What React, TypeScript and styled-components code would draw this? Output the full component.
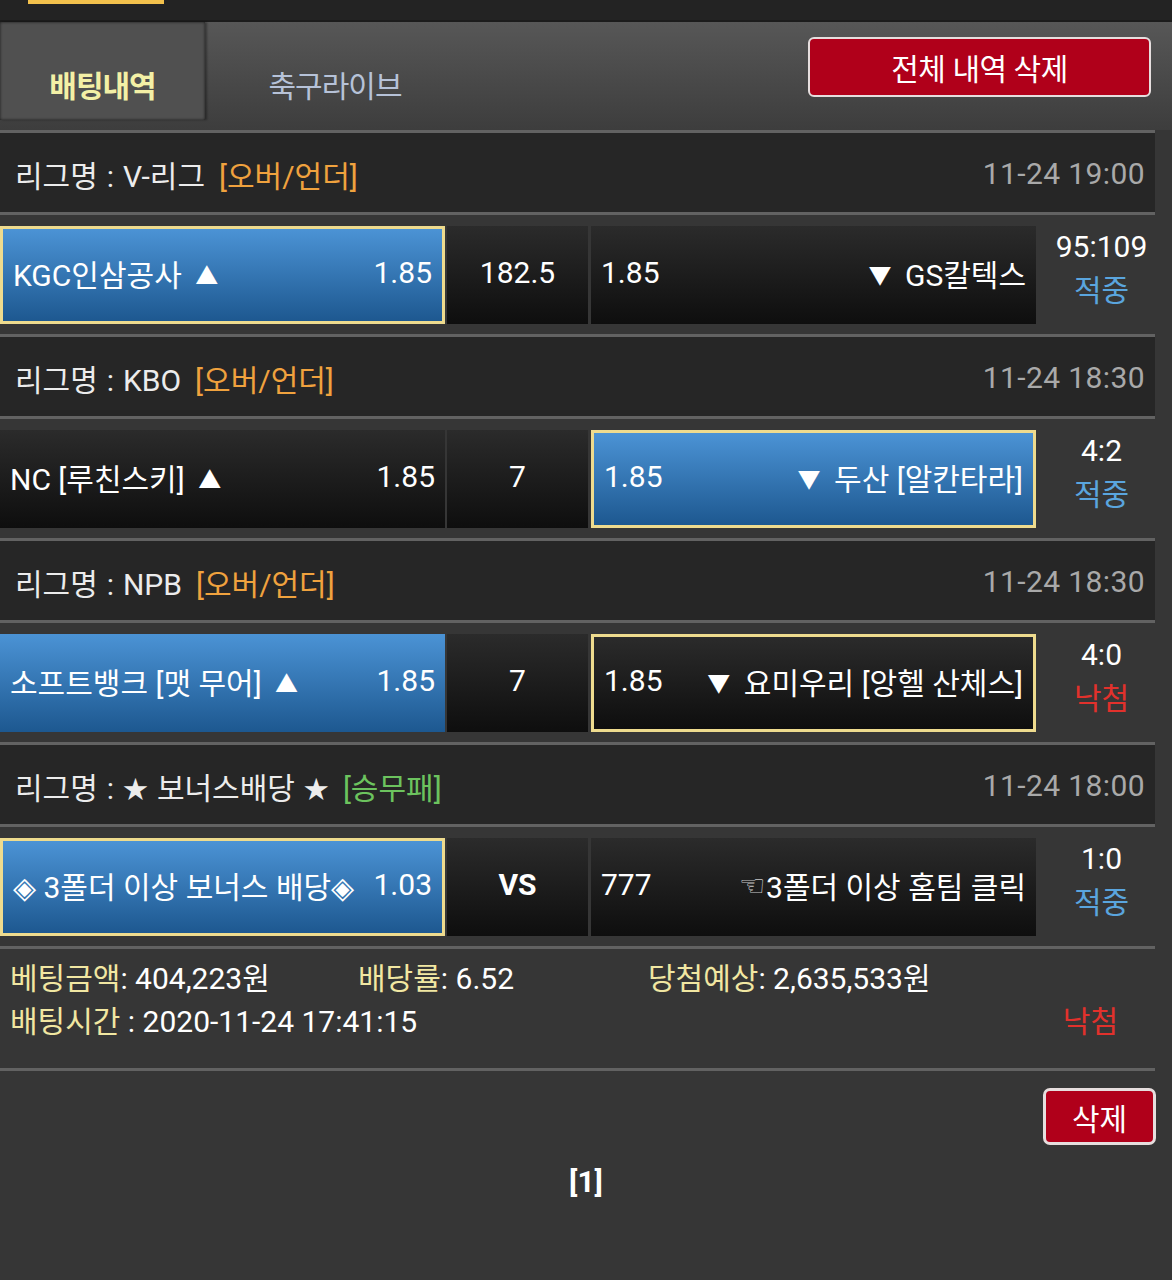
import React from "react";
import styled, { createGlobalStyle, css } from "styled-components";

const GlobalStyle = createGlobalStyle`
  html, body {
    margin: 0;
    padding: 0;
    background: #363636;
  }
  body {
    font-family: Roboto, "Noto Sans CJK KR", "DejaVu Sans", sans-serif;
    color: #fff;
    width: 1172px;
  }
  * { box-sizing: border-box; }
`;

const Page = styled.div`
  width: 1172px;
  min-height: 1280px;
  background: #363636;
`;

const TopStrip = styled.div`
  height: 22px;
  background: #232323;
  padding-left: 28px;
  border-bottom: 2px solid #1c1c1c;
`;

const YellowMark = styled.div`
  width: 136px;
  height: 4px;
  background: #f3c14c;
`;

const TabBar = styled.div`
  height: 108px;
  display: flex;
  align-items: flex-start;
  background: linear-gradient(#575757, #3d3d3d);
`;

const Tab = styled.div<{ $active?: boolean }>`
  height: 98px;
  display: flex;
  align-items: flex-end;
  justify-content: center;
  padding-bottom: 13px;
  font-size: 30px;
  line-height: 40px;
  letter-spacing: -1px;
  ${(p) =>
    p.$active
      ? css`
          width: 205px;
          background: #505050;
          color: #f3f0a6;
          font-weight: 700;
          box-shadow: inset 0 0 3px rgba(0, 0, 0, 0.7), 2px 0 2px rgba(0, 0, 0, 0.35);
        `
      : css`
          width: 260px;
          color: #b6c2d8;
          font-weight: 400;
        `}
`;

const DeleteAllButton = styled.button`
  margin: 15px 21px 0 auto;
  width: 343px;
  height: 60px;
  border-radius: 6px;
  border: 2px solid #e6dede;
  background: #b0001a;
  color: #fff;
  font-family: inherit;
  font-size: 30px;
  letter-spacing: -0.5px;
  padding: 0;
`;

const List = styled.div`
  width: 1155px;
`;

const Rule = styled.div`
  height: 3px;
  background: #626262;
`;

const LeagueHeader = styled.div`
  height: 79px;
  background: #262626;
  display: flex;
  align-items: center;
  padding: 2px 10px 0 15px;
  font-size: 30px;
`;

const LeagueName = styled.span`
  color: #ececec;
  word-spacing: 1.5px;
`;

const Star = styled.span`
  font-size: 25px;
  vertical-align: 1px;
`;

const Tag = styled.span<{ $color: string }>`
  color: ${(p) => p.$color};
  margin-left: 14px;
`;

const DateText = styled.span`
  margin-left: auto;
  color: #a9a9a9;
  letter-spacing: 0.4px;
`;

const MatchRow = styled.div`
  height: 119px;
  display: flex;
  align-items: flex-start;
  padding-top: 11px;
`;

const cellBase = css`
  height: 98px;
  display: flex;
  align-items: center;
  padding-bottom: 5px;
  font-size: 30px;
  color: #fff;
`;

const TeamCell = styled.div<{ $blue?: boolean; $outlined?: boolean; $side: "home" | "away" }>`
  ${cellBase};
  width: 445px;
  justify-content: space-between;
  padding-left: 10px;
  padding-right: 10px;
  margin-right: ${(p) => (p.$side === "home" ? "2px" : "0")};
  background: ${(p) =>
    p.$blue
      ? "linear-gradient(#4b93d5, #1d5890)"
      : "linear-gradient(#2b2b2b, #0e0e0e)"};
  border: ${(p) => (p.$outlined ? "3px solid #eedb8e" : "none")};
`;

const CenterCell = styled.div<{ $bold?: boolean }>`
  ${cellBase};
  width: 141px;
  margin-right: 3px;
  justify-content: center;
  background: linear-gradient(#2b2b2b, #0e0e0e);
  font-weight: ${(p) => (p.$bold ? 700 : 400)};
`;

const Tri = styled.span<{ $dir: "up" | "down" }>`
  font-family: "Noto Sans CJK KR", sans-serif;
  font-size: 23px;
  vertical-align: 2px;
  margin: ${(p) => (p.$dir === "up" ? "0 0 0 6px" : "0 6px 0 0")};
`;

const ResultCell = styled.div`
  width: 119px;
  height: 98px;
  padding-left: 12px;
  margin-top: -1px;
  display: flex;
  flex-direction: column;
  align-items: center;
  justify-content: flex-start;
  font-size: 30px;
  line-height: 44px;
`;

const Score = styled.span`
  color: #fff;
`;

const Status = styled.span<{ $win: boolean }>`
  color: ${(p) => (p.$win ? "#5aa5de" : "#e2312c")};
`;

const Pointer = styled.span`
  font-family: "DejaVu Sans", sans-serif;
  font-size: 30px;
  color: #c8c8c8;
  vertical-align: 2px;
`;

const FooterInfo = styled.div`
  padding: 8px 37px 25px 10px;
  font-size: 30px;
  line-height: 43px;
`;

const InfoLine = styled.div`
  display: flex;
  align-items: center;
`;

const InfoItem = styled.div<{ $width?: number }>`
  width: ${(p) => (p.$width ? `${p.$width}px` : "auto")};
  white-space: nowrap;
`;

const Label = styled.span`
  color: #f1e7a2;
`;

const Value = styled.span`
  color: #fff;
`;

const FooterStatus = styled.span`
  margin-left: auto;
  color: #e2312c;
`;

const ActionRow = styled.div`
  display: flex;
  justify-content: flex-end;
  padding: 17px 16px 0 0;
`;

const DeleteButton = styled.button`
  width: 113px;
  height: 57px;
  border-radius: 7px;
  border: 3px solid #e6dede;
  background: #b0001a;
  color: #fff;
  font-family: inherit;
  font-size: 30px;
  padding: 0;
`;

const Pagination = styled.div`
  margin-top: 17px;
  text-align: center;
  font-size: 30px;
  line-height: 40px;
  font-weight: 700;
  color: #fff;
`;

type Side = { text: React.ReactNode; odds: string; blue?: boolean; outlined?: boolean };
type Game = {
  league: React.ReactNode;
  tag: string;
  tagColor: string;
  date: string;
  home: Side;
  mid: string;
  midBold?: boolean;
  away: Side;
  score: string;
  win: boolean;
};

const ORANGE = "#f0a23e";
const GREEN = "#6cc35e";

const Up = () => <Tri $dir="up">▲</Tri>;
const Down = () => <Tri $dir="down">▼</Tri>;

const games: Game[] = [
  {
    league: "V-리그",
    tag: "[오버/언더]",
    tagColor: ORANGE,
    date: "11-24 19:00",
    home: { text: <>KGC인삼공사 <Up /></>, odds: "1.85", blue: true, outlined: true },
    mid: "182.5",
    away: { text: <><Down /> GS칼텍스</>, odds: "1.85" },
    score: "95:109",
    win: true,
  },
  {
    league: "KBO",
    tag: "[오버/언더]",
    tagColor: ORANGE,
    date: "11-24 18:30",
    home: { text: <>NC [루친스키] <Up /></>, odds: "1.85" },
    mid: "7",
    away: { text: <><Down /> 두산 [알칸타라]</>, odds: "1.85", blue: true, outlined: true },
    score: "4:2",
    win: true,
  },
  {
    league: "NPB",
    tag: "[오버/언더]",
    tagColor: ORANGE,
    date: "11-24 18:30",
    home: { text: <>소프트뱅크 [맷 무어] <Up /></>, odds: "1.85", blue: true },
    mid: "7",
    away: { text: <><Down /> 요미우리 [앙헬 산체스]</>, odds: "1.85", outlined: true },
    score: "4:0",
    win: false,
  },
  {
    league: (
      <>
        <Star>★</Star> 보너스배당 <Star>★</Star>
      </>
    ),
    tag: "[승무패]",
    tagColor: GREEN,
    date: "11-24 18:00",
    home: { text: "◈ 3폴더 이상 보너스 배당◈", odds: "1.03", blue: true, outlined: true },
    mid: "VS",
    midBold: true,
    away: {
      text: (
        <>
          <Pointer>☜</Pointer>3폴더 이상 홈팀 클릭
        </>
      ),
      odds: "777",
    },
    score: "1:0",
    win: true,
  },
];

export default function App() {
  return (
    <Page>
      <GlobalStyle />
      <TopStrip>
        <YellowMark />
      </TopStrip>
      <TabBar>
        <Tab $active>배팅내역</Tab>
        <Tab>축구라이브</Tab>
        <DeleteAllButton>전체 내역 삭제</DeleteAllButton>
      </TabBar>
      <List>
        {games.map((g, i) => (
          <React.Fragment key={i}>
            <Rule />
            <LeagueHeader>
              <LeagueName>리그명 : {g.league}</LeagueName>
              <Tag $color={g.tagColor}>{g.tag}</Tag>
              <DateText>{g.date}</DateText>
            </LeagueHeader>
            <Rule />
            <MatchRow>
              <TeamCell $side="home" $blue={g.home.blue} $outlined={g.home.outlined}>
                <span>{g.home.text}</span>
                <span>{g.home.odds}</span>
              </TeamCell>
              <CenterCell $bold={g.midBold}>{g.mid}</CenterCell>
              <TeamCell $side="away" $blue={g.away.blue} $outlined={g.away.outlined}>
                <span>{g.away.odds}</span>
                <span>{g.away.text}</span>
              </TeamCell>
              <ResultCell>
                <Score>{g.score}</Score>
                <Status $win={g.win}>{g.win ? "적중" : "낙첨"}</Status>
              </ResultCell>
            </MatchRow>
          </React.Fragment>
        ))}
        <Rule />
        <FooterInfo>
          <InfoLine>
            <InfoItem $width={348}>
              <Label>베팅금액</Label>
              <Value>: 404,223원</Value>
            </InfoItem>
            <InfoItem $width={290}>
              <Label>배당률</Label>
              <Value>: 6.52</Value>
            </InfoItem>
            <InfoItem>
              <Label>당첨예상</Label>
              <Value>: 2,635,533원</Value>
            </InfoItem>
          </InfoLine>
          <InfoLine>
            <InfoItem>
              <Label>배팅시간</Label>
              <Value> : 2020-11-24 17:41:15</Value>
            </InfoItem>
            <FooterStatus>낙첨</FooterStatus>
          </InfoLine>
        </FooterInfo>
        <Rule />
      </List>
      <ActionRow>
        <DeleteButton>삭제</DeleteButton>
      </ActionRow>
      <Pagination>[1]</Pagination>
    </Page>
  );
}
